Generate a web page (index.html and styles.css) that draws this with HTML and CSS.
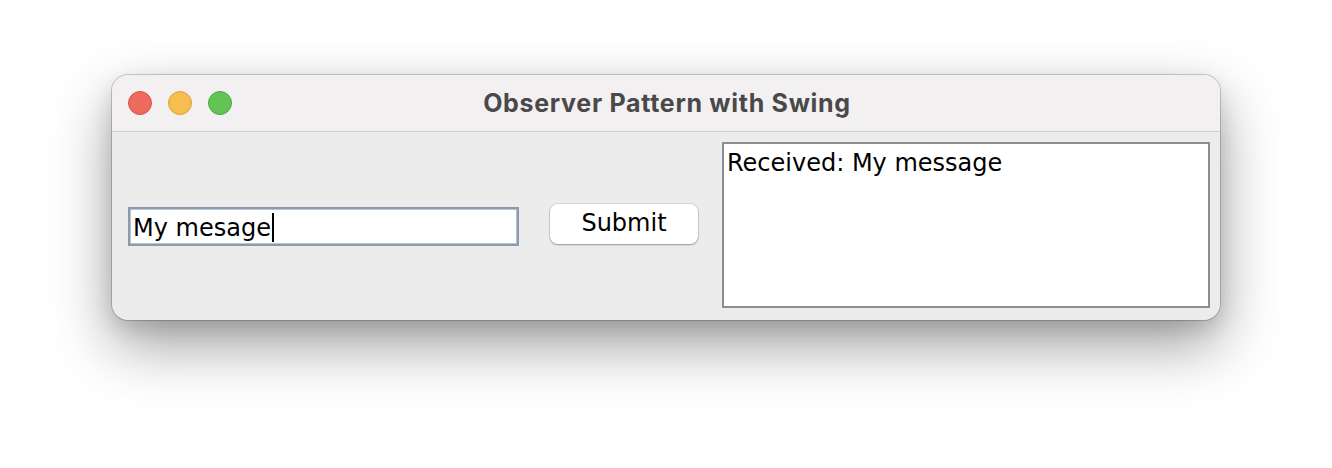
FILE: index.html
```html
<!DOCTYPE html>
<html>
<head>
<meta charset="utf-8">
<link rel="stylesheet" href="styles.css">
</head>
<body>
<div class="window">
  <div class="titlebar">
    <div class="lights">
      <span class="light red"></span>
      <span class="light yellow"></span>
      <span class="light green"></span>
    </div>
    <div class="title">Observer Pattern with Swing</div>
  </div>
  <div class="content">
    <div class="field">My mesage<span class="caret"></span></div>
    <div class="button">Submit</div>
    <div class="area">Received: My message</div>
  </div>
</div>
</body>
</html>
```
FILE: styles.css
```css
html, body {
  margin: 0;
  padding: 0;
  background: #ffffff;
  width: 1332px;
  height: 468px;
  overflow: hidden;
}
body {
  padding: 75px 0 0 112px;
  box-sizing: border-box;
  font-family: "DejaVu Sans", "Liberation Sans", sans-serif;
}
.window {
  width: 1108px;
  height: 245px;
  border-radius: 16px;
  background: #ececec;
  box-shadow: 0 0 0 1px rgba(0,0,0,0.18), 0 25px 60px rgba(0,0,0,0.38), 0 8px 20px rgba(0,0,0,0.12);
  overflow: hidden;
  display: flex;
  flex-direction: column;
}
.titlebar {
  height: 56px;
  background: #f2f0f1;
  border-bottom: 1px solid #d0cfd0;
  position: relative;
  display: flex;
  align-items: center;
  justify-content: center;
  flex-shrink: 0;
}
.lights {
  position: absolute;
  left: 16px;
  top: 16px;
  display: flex;
  gap: 16px;
}
.light {
  width: 24px;
  height: 24px;
  border-radius: 50%;
  box-sizing: border-box;
}
.red { background: #ee6a5f; border: 1px solid #d2564c; }
.yellow { background: #f5be4f; border: 1px solid #d9a23c; }
.green { background: #61c454; border: 1px solid #4ea842; }
.title {
  font-family: Inter, "Liberation Sans", sans-serif;
  font-weight: 700;
  font-size: 25px;
  color: #4a4849;
  letter-spacing: 0.7px;
  margin-left: 2px;
}
.content {
  flex: 1;
  display: flex;
  align-items: center;
  padding: 0 10px 0 16px;
  position: relative;
}
.field {
  width: 391px;
  height: 39px;
  box-sizing: border-box;
  background: #fff;
  border: 2px solid #8c9bab;
  box-shadow: inset 0 0 0 1px #b9c4d0;
  font-size: 24px;
  line-height: 36px;
  padding-left: 3px;
  padding-top: 3px;
  color: #000;
  display: flex;
  align-items: center;
}
.caret {
  display: inline-block;
  width: 2px;
  height: 29px;
  background: #000;
  margin-left: 1px;
}
.button {
  margin-left: 31px;
  width: 148px;
  height: 40px;
  box-sizing: border-box;
  background: #fff;
  border-radius: 8px;
  box-shadow: 0 0 0 1px rgba(0,0,0,0.08), 0 1px 2px rgba(0,0,0,0.3);
  font-size: 24px;
  text-align: center;
  line-height: 38px;
  color: #000;
  margin-top: -5px;
}
.area {
  margin-left: 24px;
  width: 488px;
  height: 166px;
  box-sizing: border-box;
  background: #fff;
  border: 2px solid #8e8e8e;
  font-size: 24px;
  line-height: 38px;
  padding-left: 3px;
  color: #000;
  align-self: flex-start;
  margin-top: 10px;
}
```
